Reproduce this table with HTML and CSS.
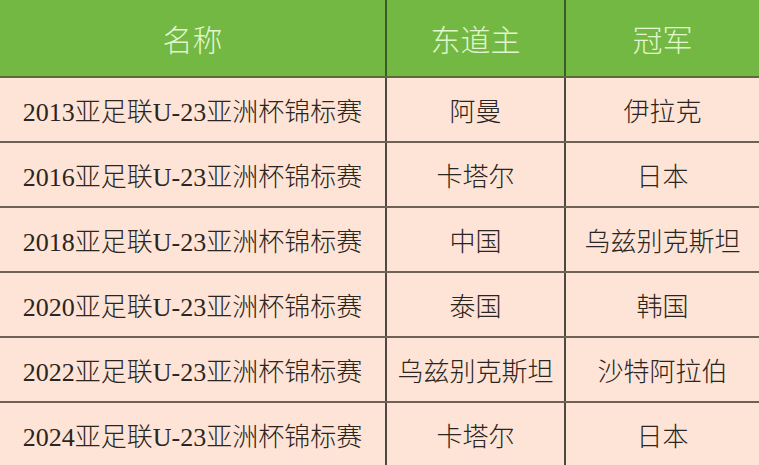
FILE: index.html
```html
<!DOCTYPE html>
<html lang="zh">
<head>
<meta charset="utf-8">
<link rel="stylesheet" href="styles.css">
</head>
<body>
<div class="table">
  <div class="row head">
    <div class="cell">名称</div>
    <div class="cell">东道主</div>
    <div class="cell">冠军</div>
  </div>
  <div class="row">
    <div class="cell">2013亚足联U-23亚洲杯锦标赛</div>
    <div class="cell">阿曼</div>
    <div class="cell">伊拉克</div>
  </div>
  <div class="row">
    <div class="cell">2016亚足联U-23亚洲杯锦标赛</div>
    <div class="cell">卡塔尔</div>
    <div class="cell">日本</div>
  </div>
  <div class="row">
    <div class="cell">2018亚足联U-23亚洲杯锦标赛</div>
    <div class="cell">中国</div>
    <div class="cell">乌兹别克斯坦</div>
  </div>
  <div class="row">
    <div class="cell">2020亚足联U-23亚洲杯锦标赛</div>
    <div class="cell">泰国</div>
    <div class="cell">韩国</div>
  </div>
  <div class="row">
    <div class="cell">2022亚足联U-23亚洲杯锦标赛</div>
    <div class="cell">乌兹别克斯坦</div>
    <div class="cell">沙特阿拉伯</div>
  </div>
  <div class="row">
    <div class="cell">2024亚足联U-23亚洲杯锦标赛</div>
    <div class="cell">卡塔尔</div>
    <div class="cell">日本</div>
  </div>
</div>
</body>
</html>
```
FILE: styles.css
```css
html, body {
  margin: 0;
  padding: 0;
  background: #fde4d6;
}
.table {
  width: 759px;
  height: 465px;
  overflow: hidden;
  font-family: "Liberation Serif", "Noto Sans CJK SC", serif;
  font-weight: 300;
  color: #2b2521;
}
.row {
  display: grid;
  grid-template-columns: 385px 179px 1fr;
  height: 65px;
  box-sizing: border-box;
  border-top: 2px solid #6f6155;
  background: #fde4d6;
  font-size: 26px;
}
.row.head {
  height: 76px;
  border-top: none;
  background: #72b843;
  color: #e0f6cc;
  font-size: 30px;
}
.row.head + .row {
  height: 65px;
  border-top-color: #5b6a3c;
}
.cell {
  display: flex;
  align-items: center;
  justify-content: center;
  white-space: nowrap;
}
.cell + .cell {
  border-left: 2px solid #4d4840;
}
.head .cell + .cell {
  border-left-color: #3d5a2a;
}
```
